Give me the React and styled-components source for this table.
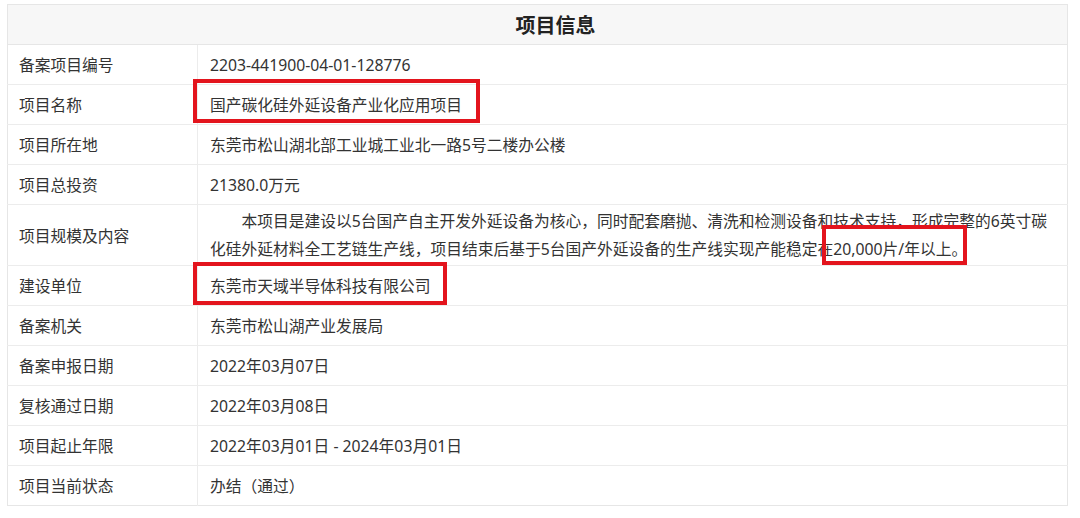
import React from "react";
import styled, { createGlobalStyle } from "styled-components";

const Global = createGlobalStyle`
  html, body {
    margin: 0;
    background: #ffffff;
  }
  body {
    padding: 4px 12px 0 7px;
    font-family: "Noto Sans", "Noto Sans CJK SC", sans-serif;
    color: #333333;
  }
`;

const Table = styled.table`
  width: 1061px;
  border-collapse: collapse;
  table-layout: fixed;
  font-size: 15.75px;
  border: 1px solid #e6e6e6;
`;

const LabelCol = styled.col`
  width: 190px;
`;

const HeadCell = styled.th`
  height: 39px;
  padding: 0 0 0 36px;
  background: #f7f7f7;
  border-bottom: 1px solid #e6e6e6;
  font-size: 20px;
  font-weight: 700;
  color: #222222;
  text-align: center;
`;

const Row = styled.tr`
  border-top: 1px solid #ececec;
`;

const Label = styled.td`
  height: ${(p) => (p.$tall ? "60px" : "39px")};
  padding: 0 0 0 11px;
  border-right: 1px solid #ececec;
  vertical-align: middle;
  white-space: nowrap;
`;

const Value = styled.td`
  padding: 0 6px 0 12px;
  vertical-align: middle;
  line-height: 28px;
  white-space: nowrap;
`;

const Para = styled.p`
  margin: 0;
  text-indent: 2em;
`;

const Mark = styled.span`
  position: relative;
  white-space: nowrap;

  &::after {
    content: "";
    position: absolute;
    top: ${(p) => p.$t}px;
    bottom: ${(p) => p.$b}px;
    left: ${(p) => p.$l}px;
    right: ${(p) => p.$r}px;
    border: 4px solid #e3141d;
    pointer-events: none;
  }
`;

const rows = [
  ["备案项目编号", "2203-441900-04-01-128776"],
  ["项目名称", <Mark $t={-15} $b={-7} $l={-17} $r={-18}>国产碳化硅外延设备产业化应用项目</Mark>],
  ["项目所在地", "东莞市松山湖北部工业城工业北一路5号二楼办公楼"],
  ["项目总投资", "21380.0万元"],
  [
    "项目规模及内容",
    <Para>
      本项目是建设以5台国产自主开发外延设备为核心，同时配套磨抛、清洗和检测设备和技术支持，形成完整的6英寸碳
      <br />
      化硅外延材料全工艺链生产线，项目结束后基于5台国产外延设备的生产线实现产能稳定在
      <Mark $t={-13} $b={-5} $l={-11} $r={0}>20,000片/年以上。</Mark>
    </Para>,
    true,
  ],
  ["建设单位", <Mark $t={-13} $b={-8} $l={-17} $r={-16}>东莞市天域半导体科技有限公司</Mark>],
  ["备案机关", "东莞市松山湖产业发展局"],
  ["备案申报日期", "2022年03月07日"],
  ["复核通过日期", "2022年03月08日"],
  ["项目起止年限", "2022年03月01日 - 2024年03月01日"],
  ["项目当前状态", "办结（通过）"],
];

export default function App() {
  return (
    <>
      <Global />
      <Table>
        <colgroup>
          <LabelCol />
          <col />
        </colgroup>
        <thead>
          <tr>
            <HeadCell colSpan={2}>项目信息</HeadCell>
          </tr>
        </thead>
        <tbody>
          {rows.map(([label, value, tall], i) => (
            <Row key={i}>
              <Label $tall={tall}>{label}</Label>
              <Value>{value}</Value>
            </Row>
          ))}
        </tbody>
      </Table>
    </>
  );
}
